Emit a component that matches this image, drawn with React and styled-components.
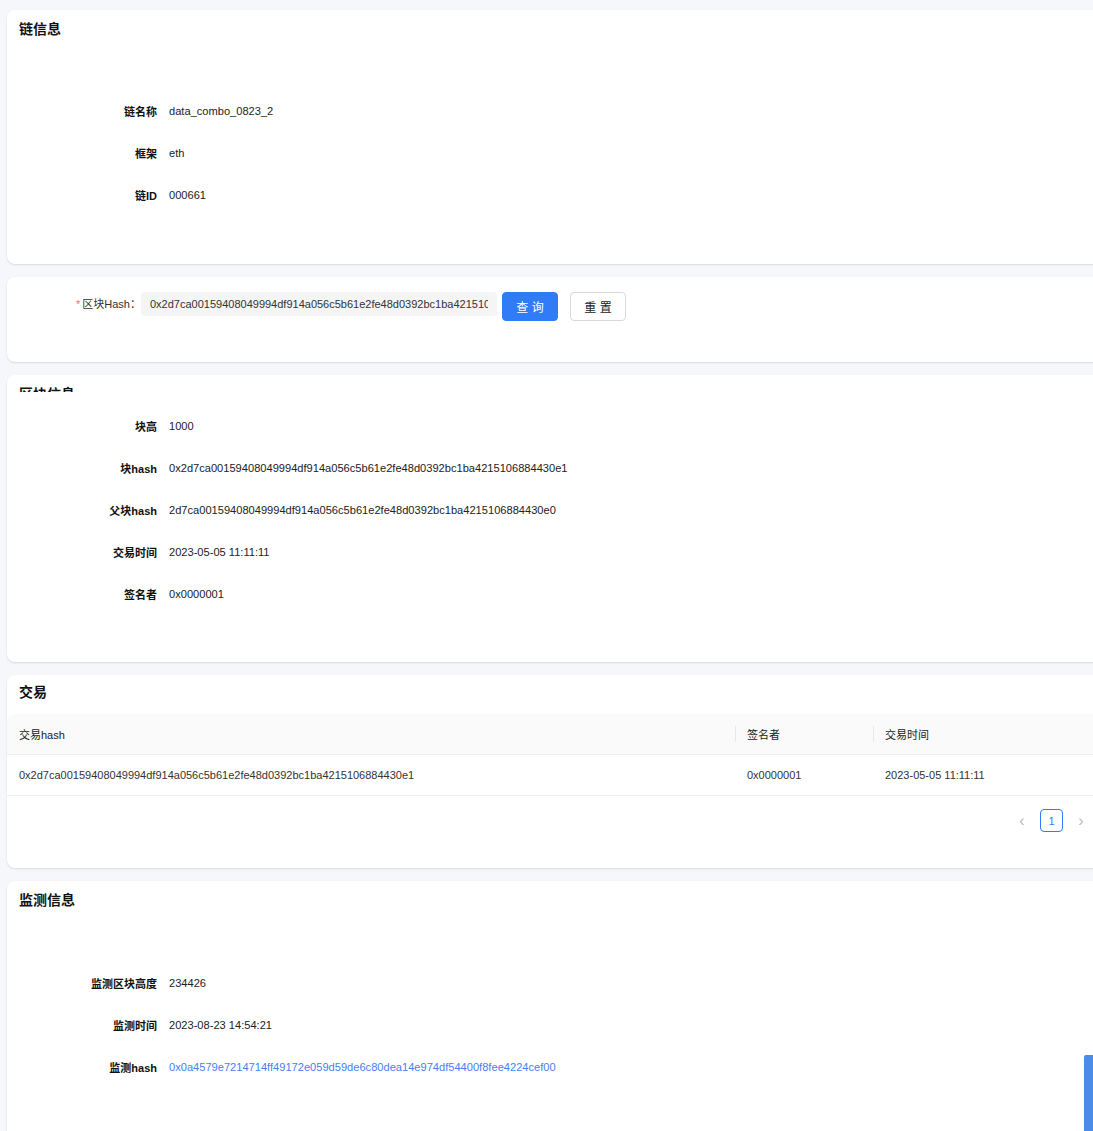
import React from 'react'
import styled, { createGlobalStyle } from 'styled-components'

const GlobalStyle = createGlobalStyle`
  html, body {
    margin: 0;
    padding: 0;
    background: #f6f7fb;
    overflow: hidden;
  }
  body {
    font-family: "Liberation Sans", "Noto Sans CJK SC", sans-serif;
    font-size: 11px;
    color: #333;
  }
`

const chainInfo = [
  ['链名称', 'data_combo_0823_2'],
  ['框架', 'eth'],
  ['链ID', '000661'],
]

const blockInfo = [
  ['块高', '1000'],
  ['块hash', '0x2d7ca00159408049994df914a056c5b61e2fe48d0392bc1ba4215106884430e1'],
  ['父块hash', '2d7ca00159408049994df914a056c5b61e2fe48d0392bc1ba4215106884430e0'],
  ['交易时间', '2023-05-05 11:11:11'],
  ['签名者', '0x0000001'],
]

const monitorInfo = [
  ['监测区块高度', '234426'],
  ['监测时间', '2023-08-23 14:54:21'],
  ['监测hash', '0x0a4579e7214714ff49172e059d59de6c80dea14e974df54400f8fee4224cef00', true],
]

const txs = [
  {
    hash: '0x2d7ca00159408049994df914a056c5b61e2fe48d0392bc1ba4215106884430e1',
    signer: '0x0000001',
    time: '2023-05-05 11:11:11',
  },
]

export default function App() {
  return (
    <>
      <GlobalStyle />
      <Page>
        <Card $pb={48}>
          <Title>链信息</Title>
          <DescList $mt={51}>
            {chainInfo.map(([k, v]) => (
              <DescRow key={k}>
                <DescLabel>{k}</DescLabel>
                <DescValue>{v}</DescValue>
              </DescRow>
            ))}
          </DescList>
        </Card>

        <Card $pb={41}>
          <SearchForm>
            <FormLabel>
              <Required>*</Required>区块Hash：
            </FormLabel>
            <HashInput
              readOnly
              value="0x2d7ca00159408049994df914a056c5b61e2fe48d0392bc1ba4215106884430e1"
            />
            <Button $primary>查 询</Button>
            <Button>重 置</Button>
          </SearchForm>
        </Card>

        <Card $pb={47}>
          <TitleClip>
            <Title>区块信息</Title>
          </TitleClip>
          <DescList $mt={13}>
            {blockInfo.map(([k, v]) => (
              <DescRow key={k}>
                <DescLabel>{k}</DescLabel>
                <DescValue>{v}</DescValue>
              </DescRow>
            ))}
          </DescList>
        </Card>

        <Card $pb={0} $flush>
          <Title $pad>交易</Title>
          <Table>
            <HeadRow>
              <HeadCell>交易hash</HeadCell>
              <HeadCell $sep>签名者</HeadCell>
              <HeadCell $sep>交易时间</HeadCell>
            </HeadRow>
            {txs.map((t) => (
              <BodyRow key={t.hash}>
                <BodyCell>{t.hash}</BodyCell>
                <BodyCell>{t.signer}</BodyCell>
                <BodyCell>{t.time}</BodyCell>
              </BodyRow>
            ))}
          </Table>
          <Pager>
            <PagerArrow>‹</PagerArrow>
            <PageItem>1</PageItem>
            <PagerArrow>›</PagerArrow>
          </Pager>
        </Card>

        <Card $pb={60}>
          <Title>监测信息</Title>
          <DescList $mt={52}>
            {monitorInfo.map(([k, v, link]) => (
              <DescRow key={k}>
                <DescLabel>{k}</DescLabel>
                <DescValue $link={link}>{v}</DescValue>
              </DescRow>
            ))}
          </DescList>
        </Card>
      </Page>
      <ScrollThumb />
    </>
  )
}

const Page = styled.div`
  display: flex;
  flex-direction: column;
  gap: 13px;
  padding: 10px 0 0 7px;
  width: 1110px;
`

const Card = styled.div`
  background: #fff;
  border-radius: 8px;
  box-shadow: 0 1px 2px rgba(0, 0, 0, 0.12);
  padding: ${(p) => (p.$flush ? '7px 0' : '9px 12px')};
  padding-bottom: ${(p) => p.$pb}px;
`

const Title = styled.div`
  font-size: 14px;
  font-weight: 700;
  line-height: 20px;
  color: #111;
  padding: ${(p) => (p.$pad ? '0 12px' : '0')};
`

const TitleClip = styled.div`
  height: 8px;
  overflow: hidden;
`

const DescList = styled.div`
  display: flex;
  flex-direction: column;
  margin-top: ${(p) => p.$mt}px;
`

const DescRow = styled.div`
  display: flex;
  align-items: center;
  height: 42px;
`

const DescLabel = styled.div`
  width: 138px;
  text-align: right;
  font-weight: 700;
  color: #111;
  padding-right: 12px;
  box-sizing: content-box;
`

const DescValue = styled.div`
  font-size: 11.1px;
  color: ${(p) => (p.$link ? '#4a7df5' : '#222')};
`

const SearchForm = styled.div`
  display: flex;
  align-items: flex-start;
  padding-top: 6px;
`

const FormLabel = styled.div`
  width: 122px;
  text-align: right;
  line-height: 24px;
  color: #333;
  flex-shrink: 0;
`

const Required = styled.span`
  color: #f56c6c;
  margin-right: 2px;
`

const HashInput = styled.input`
  width: 356px;
  height: 24px;
  box-sizing: border-box;
  border: none;
  border-radius: 4px;
  background: #f5f5f5;
  padding: 0 9px;
  font-family: inherit;
  font-size: 11px;
  color: #333;
  outline: none;
`

const Button = styled.button`
  width: 56px;
  height: 29px;
  margin-left: ${(p) => (p.$primary ? '5px' : '12px')};
  border-radius: 4px;
  font-family: inherit;
  font-size: 12px;
  cursor: pointer;
  background: ${(p) => (p.$primary ? '#2f7cf6' : '#fff')};
  color: ${(p) => (p.$primary ? '#fff' : '#222')};
  border: 1px solid ${(p) => (p.$primary ? '#2f7cf6' : '#d9d9d9')};
`

const Table = styled.div`
  margin-top: 12px;
  border-radius: 8px 8px 0 0;
  overflow: hidden;
`

const HeadRow = styled.div`
  display: grid;
  grid-template-columns: 728px 138px 1fr;
  height: 41px;
  box-sizing: border-box;
  background: #fafafa;
  border-bottom: 1px solid #eee;
`

const HeadCell = styled.div`
  position: relative;
  display: flex;
  align-items: center;
  padding-left: 12px;
  color: #222;
  &::before {
    content: '';
    display: ${(p) => (p.$sep ? 'block' : 'none')};
    position: absolute;
    left: 0;
    top: 12px;
    height: 16px;
    width: 1px;
    background: #e8e8e8;
  }
`

const BodyRow = styled.div`
  display: grid;
  grid-template-columns: 728px 138px 1fr;
  height: 41px;
  box-sizing: border-box;
  border-bottom: 1px solid #eee;
`

const BodyCell = styled.div`
  display: flex;
  align-items: center;
  padding-left: 12px;
  font-size: 11px;
  color: #333;
`

const Pager = styled.div`
  display: flex;
  align-items: center;
  justify-content: flex-end;
  gap: 10px;
  padding: 13px 28px 36px 0;
`

const PagerArrow = styled.span`
  width: 16px;
  text-align: center;
  color: #bbb;
  font-size: 16px;
  line-height: 23px;
`

const PageItem = styled.span`
  width: 23px;
  height: 23px;
  box-sizing: border-box;
  border: 1px solid #2f7cf6;
  border-radius: 4px;
  color: #2f7cf6;
  display: flex;
  align-items: center;
  justify-content: center;
  font-size: 11px;
`

const ScrollThumb = styled.div`
  position: fixed;
  right: 0;
  bottom: 0;
  width: 9px;
  height: 76px;
  background: #4a8ce8;
  border-top-left-radius: 2px;
`
